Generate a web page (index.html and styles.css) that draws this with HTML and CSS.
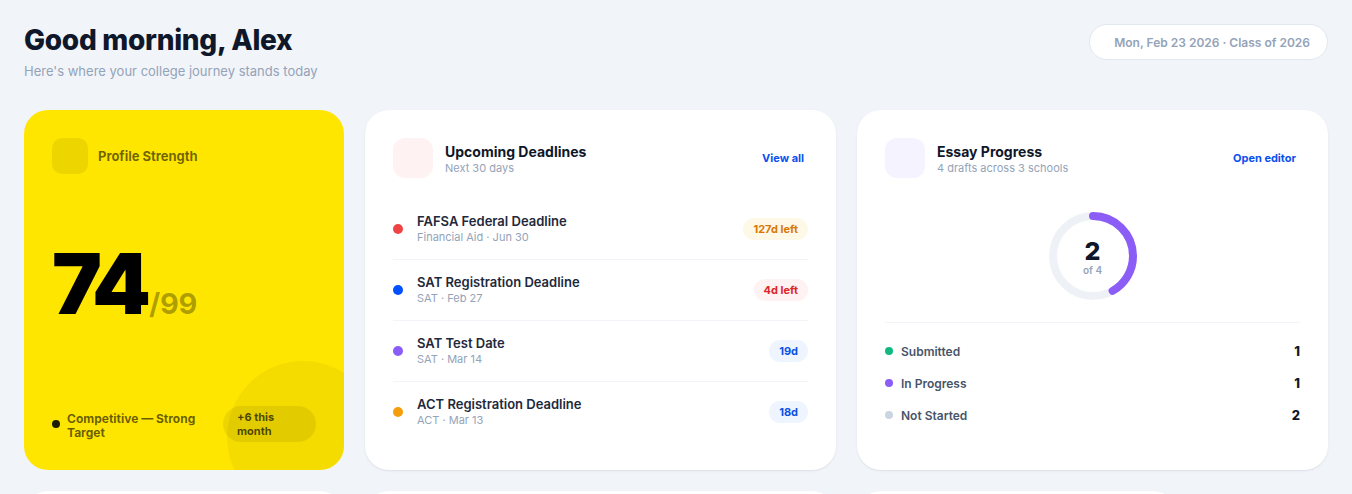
FILE: index.html
```html
<!DOCTYPE html>
<html lang="en">
<head>
<meta charset="utf-8">
<title>Dashboard</title>
<link rel="stylesheet" href="styles.css">
</head>
<body>
<div class="page">
  <header class="top">
    <div class="top-text">
      <h1 class="greet">Good morning, Alex</h1>
      <p class="sub">Here's where your college journey stands today</p>
    </div>
    <div class="date-pill">Mon, Feb 23 2026 · Class of 2026</div>
  </header>

  <section class="grid">
    <div class="card card-profile">
      <div class="blob"></div>
      <div class="profile-head">
        <div class="icon-box icon-profile"></div>
        <span class="profile-label">Profile Strength</span>
      </div>
      <div class="score"><span class="score-num">74</span><span class="score-of">/99</span></div>
      <div class="profile-foot">
        <span class="foot-dot"></span>
        <span class="foot-text">Competitive — Strong Target</span>
        <span class="foot-pill">+6 this month</span>
      </div>
    </div>

    <div class="card card-white">
      <div class="card-head">
        <div class="icon-lg icon-red"></div>
        <div class="head-text">
          <div class="head-title">Upcoming Deadlines</div>
          <div class="head-sub">Next 30 days</div>
        </div>
        <a class="head-link">View all</a>
      </div>
      <ul class="deadlines">
        <li class="dl-row">
          <span class="dot dot-red"></span>
          <div class="dl-text">
            <div class="dl-title">FAFSA Federal Deadline</div>
            <div class="dl-sub">Financial Aid · Jun 30</div>
          </div>
          <span class="badge badge-amber">127d left</span>
        </li>
        <li class="dl-row">
          <span class="dot dot-blue"></span>
          <div class="dl-text">
            <div class="dl-title">SAT Registration Deadline</div>
            <div class="dl-sub">SAT · Feb 27</div>
          </div>
          <span class="badge badge-red">4d left</span>
        </li>
        <li class="dl-row">
          <span class="dot dot-purple"></span>
          <div class="dl-text">
            <div class="dl-title">SAT Test Date</div>
            <div class="dl-sub">SAT · Mar 14</div>
          </div>
          <span class="badge badge-blue">19d</span>
        </li>
        <li class="dl-row">
          <span class="dot dot-orange"></span>
          <div class="dl-text">
            <div class="dl-title">ACT Registration Deadline</div>
            <div class="dl-sub">ACT · Mar 13</div>
          </div>
          <span class="badge badge-blue">18d</span>
        </li>
      </ul>
    </div>

    <div class="card card-white">
      <div class="card-head">
        <div class="icon-lg icon-violet"></div>
        <div class="head-text">
          <div class="head-title">Essay Progress</div>
          <div class="head-sub">4 drafts across 3 schools</div>
        </div>
        <a class="head-link">Open editor</a>
      </div>
      <div class="donut-wrap">
        <div class="donut">
          <svg width="88" height="88" viewBox="0 0 88 88">
            <circle cx="44" cy="44" r="40" fill="none" stroke="#eef2f7" stroke-width="8"/>
            <circle cx="44" cy="44" r="40" fill="none" stroke="#8b5cf6" stroke-width="8" stroke-linecap="round" stroke-dasharray="105 252" transform="rotate(-90 44 44)"/>
          </svg>
          <div class="donut-center">
            <div class="donut-num">2</div>
            <div class="donut-of">of 4</div>
          </div>
        </div>
      </div>
      <ul class="legend">
        <li class="lg-row"><span class="lg-dot dot-green"></span><span class="lg-label">Submitted</span><span class="lg-val">1</span></li>
        <li class="lg-row"><span class="lg-dot dot-purple"></span><span class="lg-label">In Progress</span><span class="lg-val">1</span></li>
        <li class="lg-row"><span class="lg-dot dot-gray"></span><span class="lg-label">Not Started</span><span class="lg-val">2</span></li>
      </ul>
    </div>
  </section>

  <section class="grid grid-two">
    <div class="card card-white card-low"></div>
    <div class="card card-white card-low"></div>
    <div class="card card-white card-low"></div>
  </section>
</div>
</body>
</html>
```

FILE: styles.css
```css
* { box-sizing: border-box; }

html, body {
  margin: 0;
  padding: 0;
  background: #f1f4f9;
  font-family: Inter, "Noto Sans", "Liberation Sans", sans-serif;
  color: #0f172a;
}

.page {
  padding: 24px 24px 24px 24px;
}

.top {
  display: flex;
  justify-content: space-between;
  align-items: flex-start;
}

.greet {
  margin: 0;
  font-size: 28px;
  line-height: 32px;
  font-weight: 800;
  letter-spacing: -0.01em;
  color: #0f172a;
}

.sub {
  margin: 6px 0 0 0;
  font-size: 13px;
  line-height: 18px;
  color: #94a3b8;
}

.date-pill {
  height: 36px;
  display: flex;
  align-items: center;
  padding: 0 17px 0 24px;
  background: #ffffff;
  border: 1px solid #e2e8f0;
  border-radius: 999px;
  font-size: 12px;
  font-weight: 600;
  color: #94a3b8;
}

.grid {
  display: grid;
  grid-template-columns: 320px 1fr 1fr;
  gap: 21px;
  margin-top: 30px;
}

.grid-two {
  grid-template-columns: 320px 471px 320px;
  margin-top: 21px;
}

.card {
  border-radius: 24px;
  min-height: 360px;
  padding: 28px;
  position: relative;
}

.card-low { min-height: 200px; }

.card-white {
  background: #ffffff;
  box-shadow: 0 1px 3px rgba(15, 23, 42, 0.06), 0 1px 1px rgba(15, 23, 42, 0.03);
}

/* Profile card */
.card-profile {
  background: #ffe600;
  overflow: hidden;
  display: flex;
  flex-direction: column;
}

.blob {
  position: absolute;
  width: 152px;
  height: 152px;
  border-radius: 50%;
  right: -35px;
  bottom: -43px;
  background: rgba(0, 0, 0, 0.045);
}

.profile-head {
  display: flex;
  align-items: center;
  gap: 10px;
  position: relative;
}

.icon-box {
  width: 36px;
  height: 36px;
  border-radius: 10px;
}

.icon-profile { background: rgba(0, 0, 0, 0.07); }

.profile-label {
  font-size: 13px;
  font-weight: 700;
  color: rgba(0, 0, 0, 0.57);
}

.score {
  margin: auto 0;
  font-size: 84px;
  line-height: 76px;
  height: 88px;
  position: relative;
  white-space: nowrap;
}

.score-num {
  font-weight: 900;
  letter-spacing: -0.06em;
  color: #000000;
}

.score-of {
  font-size: 29px;
  line-height: 29px;
  font-weight: 700;
  letter-spacing: -0.01em;
  color: rgba(0, 0, 0, 0.33);
  margin-left: 3px;
}

.profile-foot {
  display: flex;
  align-items: center;
  position: relative;
}

.foot-dot {
  width: 8px;
  height: 8px;
  border-radius: 50%;
  background: #1c1a00;
  flex: none;
  margin-right: 7px;
}

.foot-text {
  flex: 1;
  font-size: 12px;
  line-height: 14px;
  font-weight: 700;
  color: rgba(0, 0, 0, 0.6);
  padding-right: 12px;
  padding-top: 3px;
}

.foot-pill {
  flex: none;
  width: 93px;
  height: 36px;
  padding: 4px 14px;
  border-radius: 999px;
  background: rgba(0, 0, 0, 0.07);
  font-size: 11px;
  line-height: 14px;
  font-weight: 700;
  color: rgba(0, 0, 0, 0.68);
}

/* White card header */
.card-head {
  display: flex;
  align-items: center;
  gap: 12px;
}

.icon-lg {
  width: 40px;
  height: 40px;
  border-radius: 12px;
  flex: none;
}

.icon-red { background: #fef2f2; }
.icon-violet { background: #f5f3ff; }

.head-text { flex: 1; padding-top: 1px; }

.head-title {
  font-size: 14px;
  line-height: 18px;
  font-weight: 700;
  color: #0f172a;
}

.head-sub {
  font-size: 11px;
  line-height: 14px;
  color: #94a3b8;
}

.head-link {
  font-size: 11px;
  font-weight: 700;
  color: #0a50f0;
  padding-right: 4px;
  cursor: pointer;
}

/* Deadlines */
.deadlines {
  list-style: none;
  margin: 21px 0 0 0;
  padding: 0;
}

.dl-row {
  display: flex;
  align-items: center;
  padding: 14px 0;
  border-bottom: 1px solid #f1f5f9;
}

.dl-row:last-child { border-bottom: none; }

.dot {
  width: 10px;
  height: 10px;
  border-radius: 50%;
  flex: none;
  margin-right: 14px;
}

.dot-red { background: #ef4444; }
.dot-blue { background: #0050ff; }
.dot-purple { background: #8b5cf6; }
.dot-orange { background: #f59e0b; }
.dot-green { background: #10b981; }
.dot-gray { background: #cbd5e1; }

.dl-text { flex: 1; }

.dl-title {
  font-size: 13px;
  line-height: 17px;
  font-weight: 600;
  color: #1e293b;
}

.dl-sub {
  font-size: 11px;
  line-height: 15px;
  color: #94a3b8;
}

.badge {
  height: 22px;
  padding: 0 10px;
  border-radius: 999px;
  font-size: 11px;
  font-weight: 700;
  display: flex;
  align-items: center;
}

.badge-amber { background: #fef9e6; color: #d97706; }
.badge-red { background: #fef2f2; color: #dc2626; }
.badge-blue { background: #eff5ff; color: #0a50e6; }

/* Donut */
.donut-wrap {
  display: flex;
  justify-content: center;
  margin: 34px 0 22px 0;
}

.donut {
  position: relative;
  width: 88px;
  height: 88px;
}

.donut svg { display: block; }

.donut-center {
  position: absolute;
  inset: 0;
  display: flex;
  flex-direction: column;
  align-items: center;
  justify-content: center;
}

.donut-num {
  font-size: 25px;
  line-height: 26px;
  font-weight: 800;
  color: #0f172a;
  margin-top: 2px;
}

.donut-of {
  font-size: 10px;
  line-height: 13px;
  font-weight: 600;
  color: #94a3b8;
}

/* Legend */
.legend {
  list-style: none;
  margin: 0;
  padding: 12px 0 0 0;
  border-top: 1px solid #f1f5f9;
}

.lg-row {
  display: flex;
  align-items: center;
  height: 32px;
}

.lg-dot {
  width: 8px;
  height: 8px;
  border-radius: 50%;
  margin-right: 8px;
  flex: none;
}

.lg-label {
  flex: 1;
  font-size: 12px;
  font-weight: 600;
  color: #475569;
}

.lg-val {
  font-size: 13px;
  font-weight: 800;
  color: #0f172a;
}
```
